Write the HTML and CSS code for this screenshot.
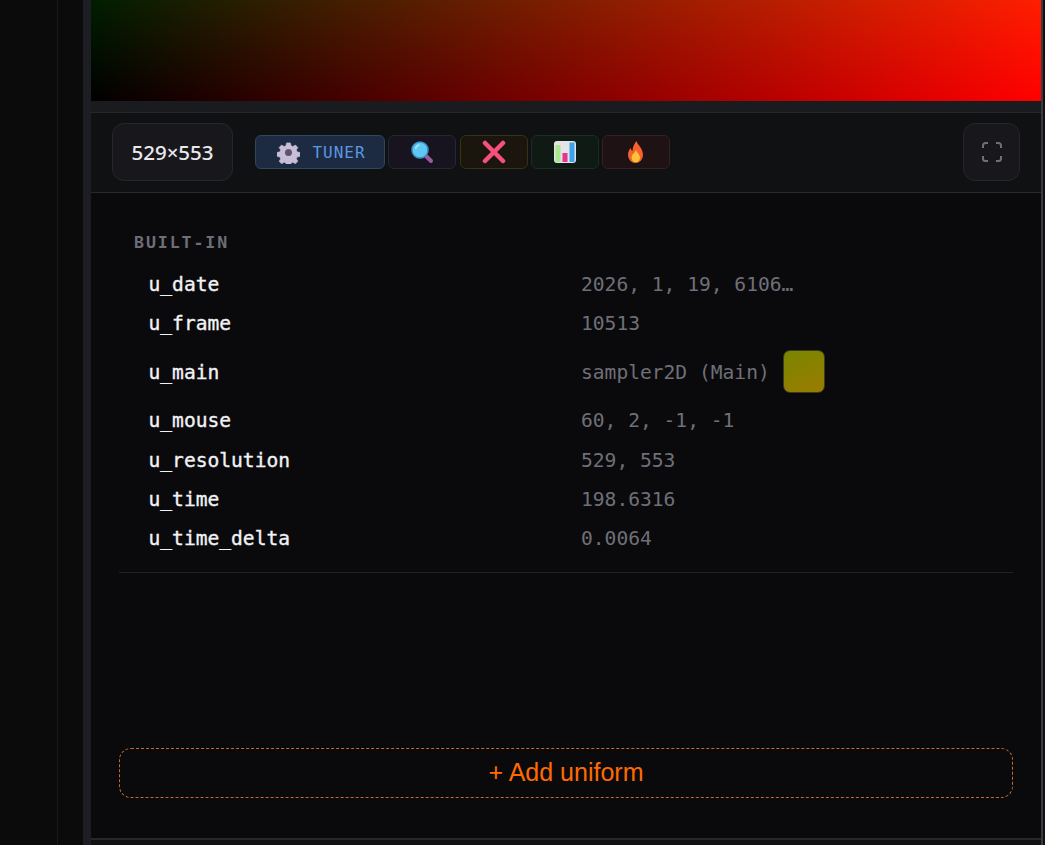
FILE: index.html
```html
<!DOCTYPE html>
<html lang="en">
<head>
<meta charset="utf-8">
<title>Uniforms</title>
<link rel="stylesheet" href="styles.css">
</head>
<body>
<div class="app">
  <aside class="sidebar"><div class="rail"></div></aside>
  <main class="main">
    <div class="canvas"></div>
    <div class="toolbar">
      <div class="size">529×553</div>
      <div class="tools">
        <button class="tool tuner">
          <svg class="emoji gear-icon" viewBox="0 0 24 24"><path class="gear" fill-rule="evenodd" d="M10 2h4l.7 3 1.900.8 2.600-1.600 2.600 2.600-1.600 2.600.8 1.900 3 .7v4l-3 .7-.8 1.900 1.600 2.600-2.600 2.600-2.600-1.600-1.900.8-.7 3h-4l-.7-3-1.900-.8-2.600 1.600-2.600-2.600 1.600-2.600-.8-1.900-3-.7v-4l3-.7.8-1.900-1.600-2.600 2.600-2.600 2.600 1.600 1.900-.8zM12 8.500a3.500 3.500 0 1 0 0 7 3.500 3.500 0 0 0 0-7z"/><circle class="gear-hub" cx="12" cy="12" r="3.500"/></svg>
          <span>TUNER</span>
        </button>
        <button class="tool search">
          <svg class="emoji" viewBox="0 0 24 24"><path d="M14.500 14.500 21 21" stroke="#9a5a9c" stroke-width="4" stroke-linecap="round"/><circle cx="10" cy="10" r="8" fill="#5fc8f2" stroke="#3d8fc4" stroke-width="1.500"/><path d="M5.500 9a5 5 0 0 1 4-4" stroke="#a8e6fb" stroke-width="1.500" fill="none"/></svg>
        </button>
        <button class="tool cross">
          <svg class="emoji" viewBox="0 0 24 24"><path d="M3 3 21 21M21 3 3 21" stroke="#f7507e" stroke-width="4.500" stroke-linecap="round"/></svg>
        </button>
        <button class="tool chart">
          <svg class="emoji" viewBox="0 0 24 24"><rect x="1" y="1" width="22" height="22" rx="3" fill="#e3e3e8"/><rect x="2.500" y="5" width="5" height="17" fill="#a6e88a"/><rect x="9.500" y="13" width="5" height="9" fill="#e8348c"/><rect x="16.500" y="2.500" width="5" height="19.500" fill="#3ba3ee"/></svg>
        </button>
        <button class="tool fire">
          <svg class="emoji" viewBox="0 0 24 24"><path d="M12.500 1c1 4 6.500 7 6.500 14a7.500 8 0 0 1-15 0c0-3 1.200-5.500 2.800-7 .2 1.500.7 2.500 1.700 3 .2-4 1.800-7.500 4-10z" fill="#f4622c"/><path d="M12 10c.8 2.500 4 4.500 4 7.500a4.200 4.800 0 0 1-8.400 0c0-3 3.400-4.500 4.400-7.500z" fill="#fcc23a"/></svg>
        </button>
      </div>
      <button class="expand">
        <svg class="expand-icon" viewBox="0 0 20 20"><path d="M1 6V3.500A2.500 2.500 0 0 1 3.500 1H6M14 1h2.500A2.500 2.500 0 0 1 19 3.500V6M19 14v2.500a2.500 2.500 0 0 1-2.500 2.500H14M6 19H3.500A2.500 2.500 0 0 1 1 16.500V14"/></svg>
      </button>
    </div>
    <section class="panel">
      <div class="table">
        <h2 class="heading">BUILT-IN</h2>
        <div class="row"><span class="name">u_date</span><span class="value">2026, 1, 19, 6106…</span></div>
        <div class="row"><span class="name">u_frame</span><span class="value">10513</span></div>
        <div class="row row-tall"><span class="name">u_main</span><span class="value value-thumb">sampler2D (Main)<i class="thumb"></i></span></div>
        <div class="row row-wide-after"><span class="name">u_mouse</span><span class="value">60, 2, -1, -1</span></div>
        <div class="row"><span class="name">u_resolution</span><span class="value">529, 553</span></div>
        <div class="row"><span class="name">u_time</span><span class="value">198.6316</span></div>
        <div class="row row-pull"><span class="name">u_time_delta</span><span class="value">0.0064</span></div>
      </div>
      <button class="add">+ Add uniform</button>
    </section>
    <div class="foot"></div>
  </main>
  <div class="edge"></div>
</div>
</body>
</html>
```
FILE: styles.css
```css
* { box-sizing: border-box; }
html, body { margin: 0; height: 100%; background: #0a0a0d; overflow: hidden; }
.app { display: flex; width: 1045px; height: 845px; }
.sidebar { width: 83px; flex: none; background: #0b0b0c; padding-left: 57px; }
.rail { width: 1px; height: 100%; background: #1a1a1c; }
.main { width: 958px; flex: none; display: flex; flex-direction: column; background: #0a0a0d; border-left: 8px solid #1d1e23; }
.edge { flex: 1; background: linear-gradient(to right, #3a3b40 0 2px, #111114 2px); }
.canvas { height: 101px; flex: none; background: linear-gradient(to right, #000, #ff0000), linear-gradient(to top, #000, #001e00); background-blend-mode: screen; }
.toolbar { height: 92px; flex: none; display: flex; align-items: center; padding: 11px 21px 0; background: linear-gradient(to bottom, #1a1b1f 0 11px, #25262a 11px 12px, #101113 12px); border-bottom: 1px solid #29292d; }
.size { width: 121px; height: 58px; display: flex; align-items: center; justify-content: center; background: #18181c; border: 1px solid #26262b; border-radius: 12px; color: #e8e8ec; font: 500 20.500px "Noto Sans", sans-serif; }
.tools { display: flex; gap: 3.250px; margin-left: 22px; }
.tool { width: 68px; height: 34px; padding: 0; display: flex; align-items: center; justify-content: center; border: 1px solid; border-radius: 6px; }
.emoji { width: 24px; height: 24px; display: block; }
.gear-icon { width: 23px; height: 23px; }
.gear { fill: #c8bcd6; stroke: #c8bcd6; stroke-width: .6; stroke-linejoin: round; }
.gear-hub { fill: #5d5468; }
.tuner { width: 130px; gap: 12px; padding-left: 3px; background: #1c2b42; border-color: #2f4560; color: #5b97e2; font: 16px "DejaVu Sans Mono", monospace; letter-spacing: 1px; }
.search { background: #17131f; border-color: #292435; }
.cross { background: #1b160d; border-color: #3a3016; }
.chart { background: #101a15; border-color: #1c2c22; }
.fire { background: #1e1214; border-color: #352220; }
.expand { width: 57px; height: 58px; margin-left: auto; padding: 0; display: flex; align-items: center; justify-content: center; background: #18181c; border: 1px solid #26262b; border-radius: 12px; }
.expand-icon { width: 20px; height: 20px; fill: none; stroke: #707077; stroke-width: 2; }
.panel { flex: 1; display: flex; flex-direction: column; padding: 30px 28px 40px; }
.table { height: 350px; border-bottom: 1px solid #222226; font-family: "DejaVu Sans Mono", monospace; }
.heading { margin: 0 0 0 15px; height: 42px; line-height: 40px; font-weight: 700; font-size: 16.600px; letter-spacing: 1.900px; color: #6e6e76; }
.row { display: grid; grid-template-columns: 432.500px 1fr; height: 39.200px; align-items: center; padding-left: 29.500px; font-size: 19.600px; }
.row-tall { height: 57.600px; }
.row-wide-after { margin-bottom: .7px; }
.row-pull { margin-top: -.7px; }
.name { color: #f2f2f5; -webkit-text-stroke: .35px #f2f2f5; }
.value { color: #6f6f77; }
.value-thumb { display: flex; align-items: center; gap: 13px; }
.thumb { width: 42px; height: 43px; margin-bottom: 2px; border-radius: 7px; border: 1px solid #3a3a20; background: linear-gradient(160deg, #7a8500, #9a7c00); }
.add { width: 894px; height: 50px; margin-top: auto; padding-bottom: 2px; background: transparent; border: 1px dashed #c8682c; border-radius: 12px; color: #ff6a00; font: 25px "Liberation Sans", sans-serif; }
.foot { height: 7px; flex: none; background: #111114; border-top: 2px solid #27272b; }
```
